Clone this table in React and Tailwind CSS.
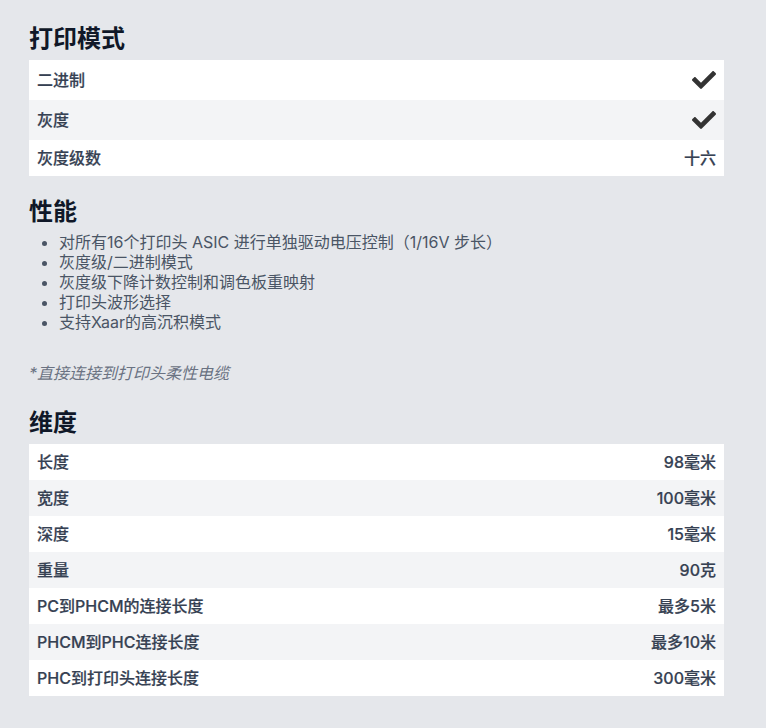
import React from "react";
import { FaCheck } from "react-icons/fa";

const font = { fontFamily: 'Inter, "Noto Sans CJK SC", sans-serif' };

function Row({ label, value, alt, icon }) {
  const txt = "text-base leading-5 font-medium text-gray-700 [-webkit-text-stroke:0.2px_#374151]";
  return (
    <div className={`flex items-center justify-between px-2 py-2 ${alt ? "bg-gray-100" : "bg-white"}`}>
      <span className={txt}>{label}</span>
      {icon ? (
        <FaCheck size={24} color="#333333" />
      ) : (
        <span className={txt}>{value}</span>
      )}
    </div>
  );
}

export default function App() {
  const dims = [
    ["长度", "98毫米"],
    ["宽度", "100毫米"],
    ["深度", "15毫米"],
    ["重量", "90克"],
    ["PC到PHCM的连接长度", "最多5米"],
    ["PHCM到PHC连接长度", "最多10米"],
    ["PHC到打印头连接长度", "300毫米"],
  ];
  return (
    <div className="min-h-[728px] bg-gray-200 px-[29px] pt-[23px] pb-8" style={font}>
      <div className="w-[695px]">
        <h2 className="text-2xl leading-8 font-bold text-gray-900 mb-[5px]">打印模式</h2>
        <div className="flex flex-col">
          <Row label="二进制" icon />
          <Row label="灰度" icon alt />
          <Row label="灰度级数" value="十六" />
        </div>

        <h2 className="text-2xl leading-8 font-bold text-gray-900 mt-5 mb-1">性能</h2>
        <ul className="list-disc pl-[30px] text-base leading-5 text-gray-600">
          <li>对所有16个打印头 ASIC 进行单独驱动电压控制（1/16V 步长）</li>
          <li>灰度级/二进制模式</li>
          <li>灰度级下降计数控制和调色板重映射</li>
          <li>打印头波形选择</li>
          <li>支持Xaar的高沉积模式</li>
        </ul>
        <p className="mt-[31px] text-base leading-5 italic text-gray-500">*直接连接到打印头柔性电缆</p>

        <h2 className="text-2xl leading-8 font-bold text-gray-900 mt-6 mb-[5px]">维度</h2>
        <div className="flex flex-col">
          {dims.map(([l, v], i) => (
            <Row key={l} label={l} value={v} alt={i % 2 === 1} />
          ))}
        </div>
      </div>
    </div>
  );
}
